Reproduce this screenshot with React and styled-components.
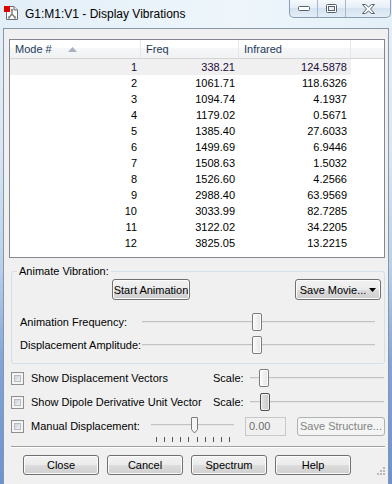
import React from 'react';
import styled, { createGlobalStyle } from 'styled-components';

const GlobalStyle = createGlobalStyle`
  html, body {
    margin: 0;
    padding: 0;
    background: #fff;
  }
  body {
    font-family: 'Liberation Sans', Arial, sans-serif;
    font-size: 11px;
    color: #000;
  }
`;

const Window = styled.div`
  width: 392px;
  height: 484px;
  overflow: hidden;
  display: flex;
  flex-direction: column;
  background: linear-gradient(to bottom, #e6f0f8 0%, #d9e7f3 30%, #b9d0ea 55%, #7fa4d8 75%, #6a93d2 100%);
`;

const TitleBar = styled.div`
  height: 28px;
  flex: none;
  display: flex;
  align-items: flex-start;
  background: linear-gradient(to right, #e2eef8 0%, #eef6fb 60%, #e4f0f8 100%);
`;

const AppIcon = styled.svg`
  margin: 6px 0 0 4px;
  flex: none;
`;

const Title = styled.div`
  margin: 6px 0 0 7px;
  font-size: 12px;
  line-height: 16px;
  color: #000;
  white-space: nowrap;
`;

const CaptionGroup = styled.div`
  margin-left: auto;
  margin-right: 1px;
  display: flex;
  height: 18px;
  border: 1px solid #8d9db1;
  border-top: none;
  border-radius: 0 0 5px 5px;
  overflow: hidden;
  box-sizing: border-box;
  background: linear-gradient(to bottom, #f5f9fc 0%, #e6eff7 45%, #d5e3f0 50%, #e2edf7 100%);
`;

const CaptionButton = styled.div`
  width: ${p => p.$w}px;
  height: 100%;
  display: flex;
  align-items: center;
  justify-content: center;
  border-left: ${p => (p.$first ? 'none' : '1px solid #a7b6c8')};
  box-sizing: border-box;
`;

const Client = styled.div`
  flex: 1;
  margin: 0 3px;
  border: 1px solid #8896a8;
  border-bottom: none;
  background: #f0f0f0;
  padding: 10px 3px 0 5px;
  display: flex;
  flex-direction: column;
  position: relative;
`;

const ListView = styled.div`
  height: 219px;
  box-sizing: border-box;
  border: 1px solid #828790;
  background: #fff;
  display: flex;
  flex-direction: column;
  align-items: flex-start;
`;

const Header = styled.div`
  display: flex;
  align-self: stretch;
  height: 19px;
  box-sizing: border-box;
  border-bottom: 1px solid #d5d5d5;
  background: linear-gradient(to bottom, #ffffff 0%, #ffffff 45%, #f6f7f8 46%, #f1f2f3 100%);
`;

const HeaderCell = styled.div`
  width: ${p => p.$w}px;
  flex: ${p => (p.$fill ? 1 : 'none')};
  box-sizing: border-box;
  border-right: ${p => (p.$fill ? 'none' : '1px solid #e3e8ee')};
  padding-left: 5px;
  display: flex;
  align-items: center;
  color: #1e395b;
  line-height: 18px;
`;

const SortArrow = styled.svg`
  margin-left: 16px;
`;

const Row = styled.div`
  display: flex;
  height: 16px;
  background: ${p => (p.$selected ? '#f0f0f0' : 'transparent')};
`;

const Cell = styled.div`
  width: ${p => p.$w}px;
  box-sizing: border-box;
  padding-right: 4px;
  text-align: right;
  line-height: 16px;
  color: ${p => (p.$selected ? '#1a0a3a' : '#000')};
`;

const Group = styled.fieldset`
  margin: 7px 0 0 2px;
  padding: 0 3px 7px 8px;
  border: 1px solid #d5dfe5;
  border-radius: 3px;
  min-width: 0;
`;

const Legend = styled.legend`
  padding: 0 2px;
  margin-left: -3px;
  line-height: 13px;
`;

const ButtonRow = styled.div`
  display: flex;
  justify-content: space-between;
  padding-left: 92px;
  margin-top: 1px;
`;

const Button = styled.div`
  width: ${p => p.$w}px;
  height: ${p => p.$h || 21}px;
  flex: none;
  box-sizing: border-box;
  display: flex;
  align-items: center;
  justify-content: center;
  gap: 3px;
  margin-left: ${p => p.$ml || 0}px;
  border: 1px solid ${p => (p.$disabled ? '#adb2b5' : '#707070')};
  border-radius: 3px;
  color: ${p => (p.$disabled ? '#838383' : '#000')};
  background: ${p =>
    p.$disabled
      ? '#f4f4f4'
      : 'linear-gradient(to bottom, #f2f2f2 0%, #ebebeb 50%, #dddddd 51%, #cfcfcf 100%)'};
  box-shadow: inset 0 0 0 1px ${p => (p.$disabled ? '#f4f4f4' : '#fbfbfb')};
  white-space: nowrap;
`;

const SliderRow = styled.div`
  display: flex;
  align-items: center;
  height: 23px;
  margin-top: ${p => p.$mt || 0}px;
`;

const SliderLabel = styled.div`
  width: ${p => p.$w}px;
  flex: none;
  white-space: nowrap;
`;

const Track = styled.div`
  position: relative;
  width: ${p => p.$w}px;
  height: 18px;
  flex: none;

  &::before {
    content: '';
    position: absolute;
    left: 0;
    right: 0;
    top: 8px;
    height: 1px;
    background: #c3c3c3;
    border-bottom: 1px solid #e6e6e6;
  }
`;

const Thumb = styled.div`
  position: absolute;
  top: 0;
  left: ${p => p.$left}px;
  width: 10px;
  height: 18px;
  box-sizing: border-box;
  border: 1px solid ${p => (p.$hot ? '#4f4f4f' : '#7a7a7a')};
  border-radius: 2px;
  background: ${p =>
    p.$hot
      ? 'linear-gradient(to right, #e4e4e4 0%, #c8c8c8 100%)'
      : 'linear-gradient(to right, #fafafa 0%, #e4e4e4 100%)'};
  box-shadow: inset 0 0 0 1px ${p => (p.$hot ? '#efefef' : '#fff')};
`;

const CheckRow = styled.div`
  display: flex;
  align-items: center;
  height: 24px;
  margin-left: 2px;
  margin-top: ${p => p.$mt || 0}px;
`;

const CheckBox = styled.div`
  width: 13px;
  height: 13px;
  flex: none;
  box-sizing: border-box;
  border: 1px solid #8e8f8f;
  background: #f4f4f4;
  padding: 2px;

  &::after {
    content: '';
    display: block;
    width: 100%;
    height: 100%;
    box-sizing: border-box;
    border: 1px solid #b9bdc1;
    background: linear-gradient(135deg, #cbcfd5 0%, #e3e5e8 60%, #f2f2f2 100%);
  }
`;

const CheckLabel = styled.div`
  margin-left: 7px;
  width: ${p => p.$w}px;
  flex: none;
  white-space: nowrap;
`;

const ManualSlider = styled.div`
  position: relative;
  width: 83px;
  height: 24px;
  flex: none;

  &::before {
    content: '';
    position: absolute;
    left: 0;
    right: 0;
    top: 10px;
    height: 1px;
    background: #c3c3c3;
    border-bottom: 1px solid #e6e6e6;
  }
`;

const PointerThumb = styled.svg`
  position: absolute;
  left: 40px;
  top: 3px;
`;

const Ticks = styled.svg`
  position: absolute;
  left: 0;
  top: 23px;
`;

const TextBox = styled.div`
  margin-left: 11px;
  width: 41px;
  height: 19px;
  flex: none;
  box-sizing: border-box;
  border: 1px solid #c6c9cc;
  background: #f0f0f0;
  color: #6d6d6d;
  padding-left: 3px;
  line-height: 17px;
`;

const Separator = styled.div`
  margin: 8px 0 0 2px;
  border-top: 1px solid #a0a0a0;
  border-bottom: 1px solid #fff;
`;

const BottomBar = styled.div`
  display: flex;
  gap: 8px;
  margin: 7px 0 0 14px;
`;

const Grip = styled.svg`
  position: absolute;
  right: 3px;
  bottom: 9px;
`;

const columns = [131, 98, 112];

const modes = [
  ['338.21', '124.5878'],
  ['1061.71', '118.6326'],
  ['1094.74', '4.1937'],
  ['1179.02', '0.5671'],
  ['1385.40', '27.6033'],
  ['1499.69', '6.9446'],
  ['1508.63', '1.5032'],
  ['1526.60', '4.2566'],
  ['2988.40', '63.9569'],
  ['3033.99', '82.7285'],
  ['3122.02', '34.2205'],
  ['3825.05', '13.2215'],
];

function TitleIcon() {
  return (
    <AppIcon width="14" height="14" viewBox="0 0 14 14">
      <path d="M2.5 0.5 H10 L13.5 4 V13.5 H2.5 Z" fill="#fff" stroke="#6b6b6b" />
      <path d="M10 0.5 V4 H13.5" fill="#e8e8e8" stroke="#6b6b6b" />
      <path d="M8 4 V8 M8 8 L5 11.5 M8 8 L11 11.5" stroke="#7a7a7a" strokeWidth="1.4" fill="none" />
      <circle cx="8" cy="4" r="1.2" fill="#8a8a8a" />
      <circle cx="5" cy="11.5" r="1.2" fill="#8a8a8a" />
      <circle cx="11" cy="11.5" r="1.2" fill="#8a8a8a" />
      <rect x="0" y="0" width="6" height="6" fill="#e00000" />
    </AppIcon>
  );
}

function Slider({ width, left, hot }) {
  return (
    <Track $w={width}>
      <Thumb $left={left} $hot={hot} />
    </Track>
  );
}

export default function App() {
  return (
    <>
      <GlobalStyle />
      <Window>
        <TitleBar>
          <TitleIcon />
          <Title>G1:M1:V1 - Display Vibrations</Title>
          <CaptionGroup>
            <CaptionButton $w={27} $first>
              <svg width="12" height="5" viewBox="0 0 12 5">
                <rect x="0.5" y="0.5" width="11" height="4" rx="1" fill="#fff" stroke="#58626e" />
              </svg>
            </CaptionButton>
            <CaptionButton $w={28}>
              <svg width="11" height="9" viewBox="0 0 11 9">
                <rect x="0.5" y="0.5" width="10" height="8" rx="1" fill="#fff" stroke="#58626e" />
                <rect x="2.5" y="2.5" width="6" height="4" fill="#e8eef4" stroke="#58626e" />
              </svg>
            </CaptionButton>
            <CaptionButton $w={45}>
              <svg width="13" height="10" viewBox="0 0 13 10">
                <path
                  d="M0.5 0.5 H3.5 L6.5 3 L9.5 0.5 H12.5 L8.5 5 L12.5 9.5 H9.5 L6.5 7 L3.5 9.5 H0.5 L4.5 5 Z"
                  fill="#fff"
                  stroke="#58626e"
                  strokeLinejoin="round"
                />
              </svg>
            </CaptionButton>
          </CaptionGroup>
        </TitleBar>

        <Client>
          <ListView>
            <Header>
              <HeaderCell $w={131}>
                Mode #
                <SortArrow width="9" height="5" viewBox="0 0 9 5">
                  <path d="M0 5 L4.5 0 L9 5 Z" fill="#a9b1ba" />
                </SortArrow>
              </HeaderCell>
              <HeaderCell $w={98}>Freq</HeaderCell>
              <HeaderCell $w={112}>Infrared</HeaderCell>
              <HeaderCell $fill />
            </Header>
            {modes.map(([freq, ir], i) => (
              <Row key={i} $selected={i === 0}>
                <Cell $w={columns[0]} $selected={i === 0}>{i + 1}</Cell>
                <Cell $w={columns[1]} $selected={i === 0}>{freq}</Cell>
                <Cell $w={columns[2]} $selected={i === 0}>{ir}</Cell>
              </Row>
            ))}
          </ListView>

          <Group>
            <Legend>Animate Vibration:</Legend>
            <ButtonRow>
              <Button $w={78}>Start Animation</Button>
              <Button $w={86}>
                Save Movie...
                <svg width="7" height="4" viewBox="0 0 7 4">
                  <path d="M0 0 H7 L3.5 4 Z" fill="#000" />
                </svg>
              </Button>
            </ButtonRow>
            <SliderRow $mt={10}>
              <SliderLabel $w={122}>Animation Frequency:</SliderLabel>
              <Slider width={233} left={110} />
            </SliderRow>
            <SliderRow>
              <SliderLabel $w={122}>Displacement Amplitude:</SliderLabel>
              <Slider width={233} left={110} />
            </SliderRow>
          </Group>

          <CheckRow $mt={2}>
            <CheckBox />
            <CheckLabel $w={182}>Show Displacement Vectors</CheckLabel>
            <SliderLabel $w={37}>Scale:</SliderLabel>
            <Slider width={134} left={9} />
          </CheckRow>
          <CheckRow>
            <CheckBox />
            <CheckLabel $w={182}>Show Dipole Derivative Unit Vector</CheckLabel>
            <SliderLabel $w={37}>Scale:</SliderLabel>
            <Slider width={134} left={10} hot />
          </CheckRow>
          <CheckRow>
            <CheckBox />
            <CheckLabel $w={120}>Manual Displacement:</CheckLabel>
            <ManualSlider>
              <PointerThumb width="7" height="17" viewBox="0 0 7 17">
                <path
                  d="M0.5 1 Q0.5 0.5 1 0.5 H6 Q6.5 0.5 6.5 1 V12.5 L3.5 16 L0.5 12.5 Z"
                  fill="#f4f4f4"
                  stroke="#7a7a7a"
                />
              </PointerThumb>
              <Ticks width="83" height="6" viewBox="0 0 83 6">
                {Array.from({ length: 10 }, (_, i) => (
                  <rect key={i} x={5 + Math.round(i * 8.1)} y="0" width="1" height="5" fill="#555" />
                ))}
              </Ticks>
            </ManualSlider>
            <TextBox>0.00</TextBox>
            <Button $w={88} $h={19} $ml={11} $disabled>
              Save Structure...
            </Button>
          </CheckRow>

          <Separator />

          <BottomBar>
            <Button $w={76} $h={20}>Close</Button>
            <Button $w={76} $h={20}>Cancel</Button>
            <Button $w={76} $h={20}>Spectrum</Button>
            <Button $w={76} $h={20}>Help</Button>
          </BottomBar>

          <Grip width="8" height="8" viewBox="0 0 8 8">
            {[[6, 0], [6, 3], [3, 3], [6, 6], [3, 6], [0, 6]].map(([x, y], i) => (
              <rect key={i} x={x} y={y} width="2" height="2" fill="#b8b8b8" />
            ))}
          </Grip>
        </Client>
      </Window>
    </>
  );
}
